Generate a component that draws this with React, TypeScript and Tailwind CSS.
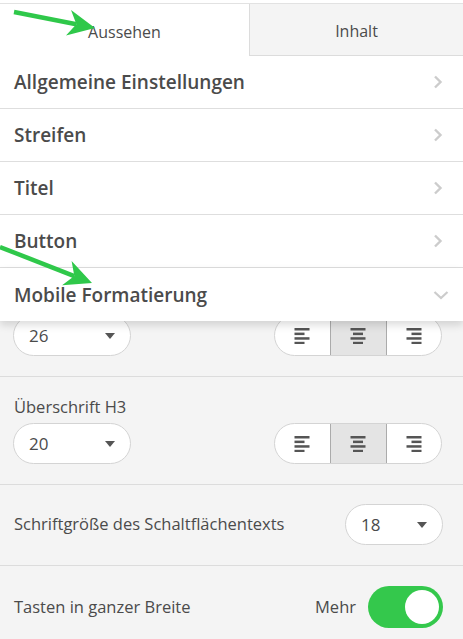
import React from "react";

const font = { fontFamily: '"Open Sans", "Liberation Sans", sans-serif' };

function ChevronRight() {
  return (
    <svg width="10" height="14" viewBox="0 0 10 14" className="shrink-0">
      <path d="M2 1.5 L7.5 7 L2 12.5" fill="none" stroke="#cccccc" strokeWidth="2.4" />
    </svg>
  );
}

function ChevronDown() {
  return (
    <svg width="16" height="10" viewBox="0 0 16 10" className="shrink-0">
      <path d="M1.5 2 L8 8 L14.5 2" fill="none" stroke="#cccccc" strokeWidth="2.2" />
    </svg>
  );
}

function Row({ label, open }: { label: string; open?: boolean }) {
  return (
    <div
      className={
        "h-[53px] flex items-center justify-between pl-[14px] " +
        (open ? "pr-[14px] relative z-10 bg-white shadow-[0_4px_8px_rgba(0,0,0,0.14)]" : "pr-[20px] border-b border-[#dedede]")
      }
    >
      <span className="text-[19px] font-semibold text-[#4b4b4b] pt-[1px]">{label}</span>
      {open ? <ChevronDown /> : <ChevronRight />}
    </div>
  );
}

function Select({ value, width }: { value: string; width: string }) {
  return (
    <div
      className={
        "h-[41px] rounded-full border border-[#d4d4d4] bg-white flex items-center justify-between pl-[15px] pr-[15px] " +
        width
      }
    >
      <span className="text-[17px] text-[#4b4b4b]">{value}</span>
      <svg width="10" height="6" viewBox="0 0 10 6">
        <path d="M0 0 H10 L5 6 Z" fill="#555" />
      </svg>
    </div>
  );
}

function AlignIcon({ kind }: { kind: "left" | "center" | "right" }) {
  const lines = [15, 10, 15, 10];
  return (
    <svg width="16" height="17" viewBox="0 0 16 17">
      {lines.map((w, i) => {
        const x = kind === "left" ? 0.5 : kind === "right" ? 15.5 - w : (16 - w) / 2;
        return <rect key={i} x={x} y={1 + i * 4.6} width={w} height="2.5" fill="#555" />;
      })}
    </svg>
  );
}

function AlignGroup() {
  return (
    <div className="h-[41px] w-[168px] rounded-full border border-[#d4d4d4] bg-white flex overflow-hidden">
      <div className="flex-1 flex items-center justify-center">
        <AlignIcon kind="left" />
      </div>
      <div className="w-[57px] flex items-center justify-center bg-[#e4e4e4] border border-[#ababab] -my-px">
        <AlignIcon kind="center" />
      </div>
      <div className="flex-1 flex items-center justify-center">
        <AlignIcon kind="right" />
      </div>
    </div>
  );
}

function Arrow({ x1, y1, x2, y2 }: { x1: number; y1: number; x2: number; y2: number }) {
  const ang = Math.atan2(y2 - y1, x2 - x1);
  const len = 30;
  const spread = 0.45;
  const ax = x2 - len * Math.cos(ang - spread);
  const ay = y2 - len * Math.sin(ang - spread);
  const bx = x2 - len * Math.cos(ang + spread);
  const by = y2 - len * Math.sin(ang + spread);
  const mx = x2 - 19 * Math.cos(ang);
  const my = y2 - 19 * Math.sin(ang);
  return (
    <g>
      <line x1={x1} y1={y1} x2={mx} y2={my} stroke="#2fc84a" strokeWidth="4.5" />
      <path d={`M${x2} ${y2} L${ax} ${ay} L${mx} ${my} L${bx} ${by} Z`} fill="#2fc84a" />
    </g>
  );
}

export default function App() {
  return (
    <div className="relative w-[463px] h-[639px] overflow-hidden bg-white" style={font}>
      <div className="h-[4px] bg-white border-b border-[#e2e2e2]" />
      <div className="flex h-[52px]">
        <div className="w-[249px] flex items-center justify-center text-[16px] text-[#4b4b4b] pt-[3px]">Aussehen</div>
        <div className="flex-1 flex items-center justify-center text-[16px] text-[#4b4b4b] bg-[#f4f4f4] border-l border-b border-[#dcdcdc] pt-[3px]">
          Inhalt
        </div>
      </div>
      <Row label="Allgemeine Einstellungen" />
      <Row label="Streifen" />
      <Row label="Titel" />
      <Row label="Button" />
      <Row label="Mobile Formatierung" open />
      <div className="bg-[#f4f4f4] -mt-[1px]">
        <div className="-mt-[6px] pb-[20px] pl-[13px] pr-[21px] flex items-center justify-between border-b border-[#dcdcdc]">
          <Select value="26" width="w-[118px]" />
          <AlignGroup />
        </div>
        <div className="pt-[20px] pb-[20px] pl-[13px] pr-[21px] border-b border-[#dcdcdc]">
          <div className="text-[16.5px] text-[#4b4b4b] leading-[20px] mb-[6px] pl-[1px]">Überschrift H3</div>
          <div className="flex items-center justify-between">
            <Select value="20" width="w-[118px]" />
            <AlignGroup />
          </div>
        </div>
        <div className="pt-[19px] pb-[20px] pl-[14px] pr-[20px] flex items-center justify-between border-b border-[#dcdcdc]">
          <span className="text-[16.5px] text-[#4b4b4b]">Schriftgröße des Schaltflächentexts</span>
          <Select value="18" width="w-[98px]" />
        </div>
        <div className="pt-[20px] pb-[20px] pl-[14px] pr-[20px] flex items-center justify-between">
          <span className="text-[16.5px] text-[#4b4b4b]">Tasten in ganzer Breite</span>
          <div className="flex items-center gap-[12px]">
            <span className="text-[16.5px] text-[#4b4b4b]">Mehr</span>
            <div className="w-[75px] h-[42px] rounded-full bg-[#34c84c] flex items-center justify-end pr-[4px]">
              <div className="w-[34px] h-[34px] rounded-full bg-white" />
            </div>
          </div>
        </div>
      </div>
      <svg className="absolute left-0 top-0 z-20 pointer-events-none" width="463" height="639">
        <Arrow x1={14} y1={12} x2={95} y2={28} />
        <Arrow x1={0} y1={247} x2={92} y2={283} />
      </svg>
    </div>
  );
}
